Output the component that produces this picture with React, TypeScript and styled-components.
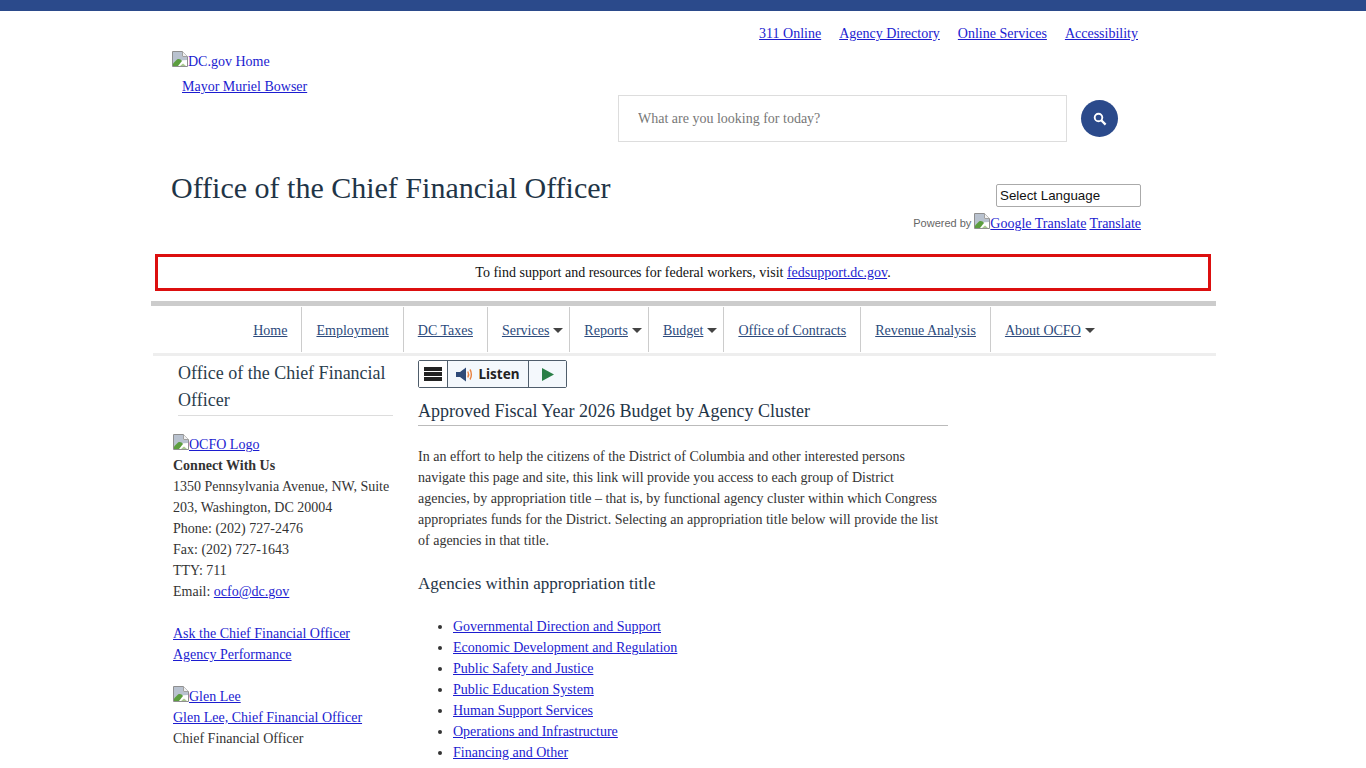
import React from "react";
import styled, { createGlobalStyle } from "styled-components";

const GlobalStyle = createGlobalStyle`
  html, body {
    margin: 0;
    padding: 0;
    height: 100%;
    overflow: hidden;
    background: #fff;
  }
  body {
    font-family: "Liberation Serif", "Times New Roman", serif;
    font-size: 14px;
    line-height: 21px;
    color: #333;
  }
  a {
    color: #1c1cd0;
  }
`;

const BrokenImage = () => (
  <BrokenIcon width="16" height="16" viewBox="0 0 16 16">
    <path d="M0.5 0.5H10.5L15.5 5.5V15.5H0.5Z" fill="#fff" stroke="#8f8f8f" />
    <path d="M1 1H10V6H15V9L8 9.5L1 14Z" fill="#b9c2cf" />
    <path d="M10.5 0.5V5.5H15.5" fill="#f2f2f2" stroke="#a0a0a0" />
    <path d="M1 15V12.5L5 8.5C7 7.5 9 8.5 10 10L6 15Z" fill="#5c9e3f" />
    <path d="M8 15L11 12.5L14 15Z" fill="#a9c88f" />
  </BrokenIcon>
);

const App = () => {
  return (
    <>
      <GlobalStyle />
      <TopBar />
      <Page>
        <TopLinks>
          <a href="#">311 Online</a>
          <a href="#">Agency Directory</a>
          <a href="#">Online Services</a>
          <a href="#">Accessibility</a>
        </TopLinks>
        <LogoRow>
          <LogoColumn>
            <LogoLink href="#">
              <BrokenImage />
              DC.gov Home
            </LogoLink>
            <MayorLink href="#">Mayor Muriel Bowser</MayorLink>
          </LogoColumn>
          <SearchArea>
            <SearchInput placeholder="What are you looking for today?" />
            <SearchButton aria-label="Search">
              <svg width="14" height="14" viewBox="0 0 14 14" fill="none">
                <circle cx="5.5" cy="5.5" r="3.8" stroke="#fff" strokeWidth="1.9" />
                <path d="M8.4 8.4L12.6 12.6" stroke="#fff" strokeWidth="2.2" />
              </svg>
            </SearchButton>
          </SearchArea>
        </LogoRow>
        <TitleRow>
          <SiteTitle>Office of the Chief Financial Officer</SiteTitle>
          <TranslateBlock>
            <LanguageBox>Select Language</LanguageBox>
            <PoweredRow>
              <PoweredText>Powered by</PoweredText>
              <a href="#">
                <BrokenImage />
                Google Translate
              </a>
              <a href="#">Translate</a>
            </PoweredRow>
          </TranslateBlock>
        </TitleRow>
        <Notice>
          To find support and resources for federal workers, visit{" "}
          <a href="#">fedsupport.dc.gov</a>.
        </Notice>
        <NavRule />
        <Nav>
          <NavItem><a href="#">Home</a></NavItem>
          <NavItem><a href="#">Employment</a></NavItem>
          <NavItem><a href="#">DC Taxes</a></NavItem>
          <NavItem $hasCaret><a href="#">Services</a><Caret /></NavItem>
          <NavItem $hasCaret><a href="#">Reports</a><Caret /></NavItem>
          <NavItem $hasCaret><a href="#">Budget</a><Caret /></NavItem>
          <NavItem><a href="#">Office of Contracts</a></NavItem>
          <NavItem><a href="#">Revenue Analysis</a></NavItem>
          <NavItem $hasCaret $last><a href="#">About OCFO</a><Caret /></NavItem>
        </Nav>
        <Columns>
          <Sidebar>
            <SideTitle>Office of the Chief Financial Officer</SideTitle>
            <SideBlock>
              <a href="#">
                <BrokenImage />
                OCFO Logo
              </a>
              <strong>Connect With Us</strong>
              <span>1350 Pennsylvania Avenue, NW, Suite 203, Washington, DC 20004</span>
              <span>Phone: (202) 727-2476</span>
              <span>Fax: (202) 727-1643</span>
              <span>TTY: 711</span>
              <span>
                Email: <a href="#">ocfo@dc.gov</a>
              </span>
            </SideBlock>
            <SideBlock>
              <a href="#">Ask the Chief Financial Officer</a>
              <a href="#">Agency Performance</a>
            </SideBlock>
            <SideBlock>
              <a href="#">
                <BrokenImage />
                Glen Lee
              </a>
              <a href="#">Glen Lee, Chief Financial Officer</a>
              <span>Chief Financial Officer</span>
            </SideBlock>
          </Sidebar>
          <Main>
            <ListenBar>
              <ListenCell $width={28}>
                <svg width="18" height="14" viewBox="0 0 18 14">
                  <path d="M0 0H18V4H0ZM0 5H18V9H0ZM0 10H18V14H0Z" fill="#222" />
                </svg>
              </ListenCell>
              <ListenCell $width={81} $tinted>
                <svg width="18" height="15" viewBox="0 0 18 15" fill="none">
                  <path d="M0 5H4L10 0.5V14.5L4 10H0Z" fill="#2f4a78" />
                  <path d="M11.8 4.5C12.8 6.3 12.8 8.7 11.8 10.5" stroke="#e8803f" strokeWidth="1.4" />
                  <path d="M14 2.5C15.8 5.2 15.8 9.8 14 12.5" stroke="#e8803f" strokeWidth="1.4" />
                </svg>
                <ListenLabel>Listen</ListenLabel>
              </ListenCell>
              <ListenCell $width={38} $tinted>
                <svg width="12" height="13" viewBox="0 0 12 13">
                  <path d="M0 0L12 6.5L0 13Z" fill="#2a7f47" />
                </svg>
              </ListenCell>
            </ListenBar>
            <PageHeading>Approved Fiscal Year 2026 Budget by Agency Cluster</PageHeading>
            <Intro>
              In an effort to help the citizens of the District of Columbia and other interested
              persons navigate this page and site, this link will provide you access to each group
              of District agencies, by appropriation title – that is, by functional agency cluster
              within which Congress appropriates funds for the District. Selecting an appropriation
              title below will provide the list of agencies in that title.
            </Intro>
            <SubHeading>Agencies within appropriation title</SubHeading>
            <AgencyList>
              <li><a href="#">Governmental Direction and Support</a></li>
              <li><a href="#">Economic Development and Regulation</a></li>
              <li><a href="#">Public Safety and Justice</a></li>
              <li><a href="#">Public Education System</a></li>
              <li><a href="#">Human Support Services</a></li>
              <li><a href="#">Operations and Infrastructure</a></li>
              <li><a href="#">Financing and Other</a></li>
            </AgencyList>
          </Main>
        </Columns>
      </Page>
    </>
  );
};
export default App;

const TopBar = styled.div`
  height: 11px;
  background-color: #2b4a8b;
`;

const Page = styled.div`
  width: 1065px;
  margin-left: 151px;
`;

const BrokenIcon = styled.svg`
  display: inline-block;
  vertical-align: -1px;
`;

const TopLinks = styled.div`
  display: flex;
  justify-content: flex-end;
  gap: 18px;
  padding: 12px 78px 0 0;
  height: 33px;
  box-sizing: border-box;
`;

const LogoRow = styled.div`
  display: flex;
  justify-content: space-between;
  height: 98px;
`;

const LogoColumn = styled.div`
  display: flex;
  flex-direction: column;
  align-items: flex-start;
  gap: 4px;
  padding: 7px 0 0 21px;
`;

const LogoLink = styled.a`
  text-decoration: none;
`;

const MayorLink = styled.a`
  margin-left: 10px;
`;

const SearchArea = styled.div`
  display: flex;
  align-items: center;
  gap: 14px;
  height: 47px;
  margin: 51px 98px 0 0;
`;

const SearchInput = styled.input`
  width: 449px;
  height: 47px;
  box-sizing: border-box;
  padding: 0 19px;
  border: 1px solid #ddd;
  font-family: inherit;
  font-size: 14px;
  outline: none;

  &::placeholder {
    color: #777;
    opacity: 1;
  }
`;

const SearchButton = styled.button`
  display: flex;
  align-items: center;
  justify-content: center;
  width: 37px;
  height: 37px;
  padding: 0;
  border: none;
  border-radius: 50%;
  background-color: #2b4a8b;
`;

const TitleRow = styled.div`
  display: flex;
  justify-content: space-between;
  height: 112px;
`;

const SiteTitle = styled.h1`
  margin: 28px 0 0 20px;
  font-size: 30px;
  line-height: 36px;
  font-weight: 400;
  color: #1f3547;
`;

const TranslateBlock = styled.div`
  display: flex;
  flex-direction: column;
  align-items: flex-end;
  gap: 6px;
  margin: 42px 75px 0 0;
`;

const LanguageBox = styled.div`
  width: 145px;
  height: 23px;
  box-sizing: border-box;
  padding: 0 3px;
  border: 1px solid #aaa;
  border-radius: 2px;
  font-family: "Liberation Sans", Arial, sans-serif;
  font-size: 13.33px;
  line-height: 21px;
  color: #111;
`;

const PoweredRow = styled.div`
  display: flex;
  align-items: center;
  gap: 3px;
`;

const PoweredText = styled.span`
  font-family: "Liberation Sans", Arial, sans-serif;
  font-size: 11px;
  color: #666;
`;

const Notice = styled.div`
  width: 1056px;
  height: 37px;
  box-sizing: border-box;
  margin-left: 4px;
  border: 3px solid #dc0f0f;
  font-size: 14px;
  line-height: 31px;
  text-align: center;
  color: #111;
`;

const NavRule = styled.div`
  height: 5px;
  margin-top: 10px;
  background-color: #ccc;
`;

const Nav = styled.nav`
  display: flex;
  justify-content: center;
  height: 50px;
  padding: 1px 29px 1px 0;
  margin-left: 2px;
  box-sizing: border-box;
  border-bottom: 3px solid #eee;
`;

const NavItem = styled.div<{ $last?: boolean; $hasCaret?: boolean }>`
  display: flex;
  align-items: center;
  gap: 4px;
  padding: 2px ${(p) => (p.$hasCaret ? "6px" : "14px")} 0 14px;
  border-right: ${(p) => (p.$last ? "none" : "1px solid #ccc")};

  a {
    color: #2c4a7c;
  }
`;

const Caret = styled.span`
  width: 0;
  height: 0;
  border-left: 5px solid transparent;
  border-right: 5px solid transparent;
  border-top: 5px solid #444;
`;

const Columns = styled.div`
  display: flex;
`;

const Sidebar = styled.aside`
  width: 220px;
  margin-left: 22px;
`;

const SideTitle = styled.h3`
  margin: 4px 0 0 5px;
  padding-bottom: 1px;
  border-bottom: 1px solid #ddd;
  font-size: 18px;
  line-height: 27px;
  font-weight: 400;
  color: #2a3d4d;
`;

const SideBlock = styled.div`
  display: flex;
  flex-direction: column;
  align-items: flex-start;
  margin-top: 21px;

  &:first-of-type {
    margin-top: 18px;
  }

  strong {
    color: #333;
  }
`;

const Main = styled.main`
  width: 530px;
  margin-left: 25px;
`;

const ListenBar = styled.div`
  display: inline-flex;
  margin-top: 4px;
  height: 28px;
  box-sizing: border-box;
  border: 1px solid #4f5d6b;
  border-radius: 2px;
  vertical-align: top;
`;

const ListenCell = styled.div<{ $width: number; $tinted?: boolean }>`
  display: flex;
  align-items: center;
  justify-content: center;
  gap: 4px;
  width: ${(p) => p.$width}px;
  box-sizing: border-box;
  background-color: ${(p) => (p.$tinted ? "#f4f8fc" : "#fff")};
  border-left: 1px solid #4f5d6b;

  &:first-child {
    border-left: none;
  }
`;

const ListenLabel = styled.span`
  font-family: "Noto Sans", "Open Sans", sans-serif;
  font-size: 13.5px;
  font-weight: 700;
  color: #222;
`;

const PageHeading = styled.h2`
  margin: 11px 0 0;
  padding-bottom: 2px;
  border-bottom: 1px solid #bbb;
  font-size: 18px;
  line-height: 24px;
  font-weight: 400;
  color: #1f3547;
`;

const Intro = styled.p`
  margin: 20px 0 0;
`;

const SubHeading = styled.h3`
  margin: 21px 0 0;
  font-size: 17px;
  line-height: 24px;
  font-weight: 400;
  color: #1f3547;
`;

const AgencyList = styled.ul`
  margin: 20px 0 0;
  padding-left: 35px;
`;
